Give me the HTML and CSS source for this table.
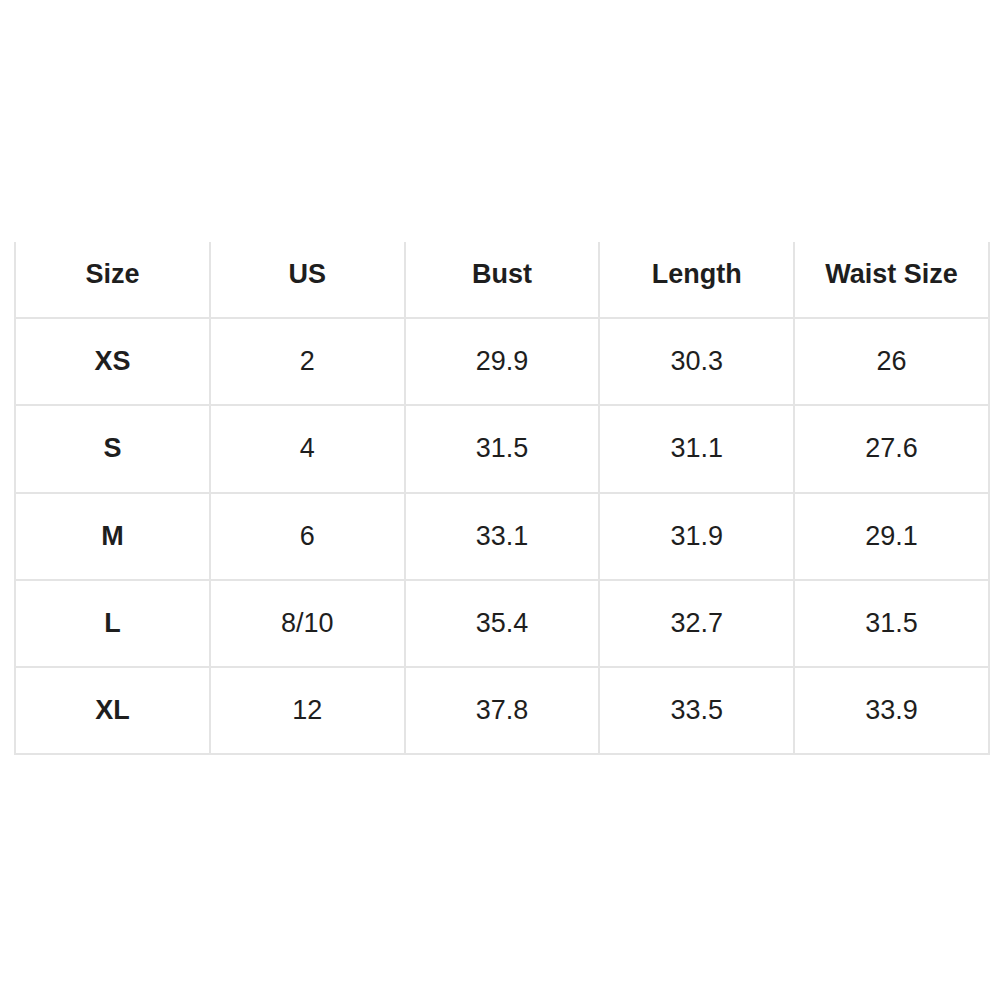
FILE: index.html
```html
<!DOCTYPE html>
<html>
<head>
<meta charset="utf-8">
<link rel="stylesheet" href="styles.css">
</head>
<body>
<div class="page">
  <table class="sizes">
    <thead>
      <tr><th>Size</th><th>US</th><th>Bust</th><th>Length</th><th>Waist Size</th></tr>
    </thead>
    <tbody>
      <tr><th>XS</th><td>2</td><td>29.9</td><td>30.3</td><td>26</td></tr>
      <tr><th>S</th><td>4</td><td>31.5</td><td>31.1</td><td>27.6</td></tr>
      <tr><th>M</th><td>6</td><td>33.1</td><td>31.9</td><td>29.1</td></tr>
      <tr><th>L</th><td>8/10</td><td>35.4</td><td>32.7</td><td>31.5</td></tr>
      <tr><th>XL</th><td>12</td><td>37.8</td><td>33.5</td><td>33.9</td></tr>
    </tbody>
  </table>
</div>
</body>
</html>
```
FILE: styles.css
```css
html, body {
  margin: 0;
  padding: 0;
  background: #ffffff;
}
.page {
  padding: 242px 10px 0 14px;
}
.sizes {
  width: 976px;
  border-collapse: collapse;
  table-layout: fixed;
  font-family: "Liberation Sans", Arial, Helvetica, sans-serif;
  font-size: 27px;
  color: #1e1e1e;
}
.sizes th, .sizes td {
  border: 2px solid #e4e4e4;
  text-align: center;
  padding: 0;
  height: 85.25px;
}
.sizes th {
  font-weight: bold;
}
.sizes thead th {
  border-top: none;
  padding-bottom: 10px;
  box-sizing: border-box;
  height: 76px;
}
.sizes td {
  font-weight: normal;
}
```
